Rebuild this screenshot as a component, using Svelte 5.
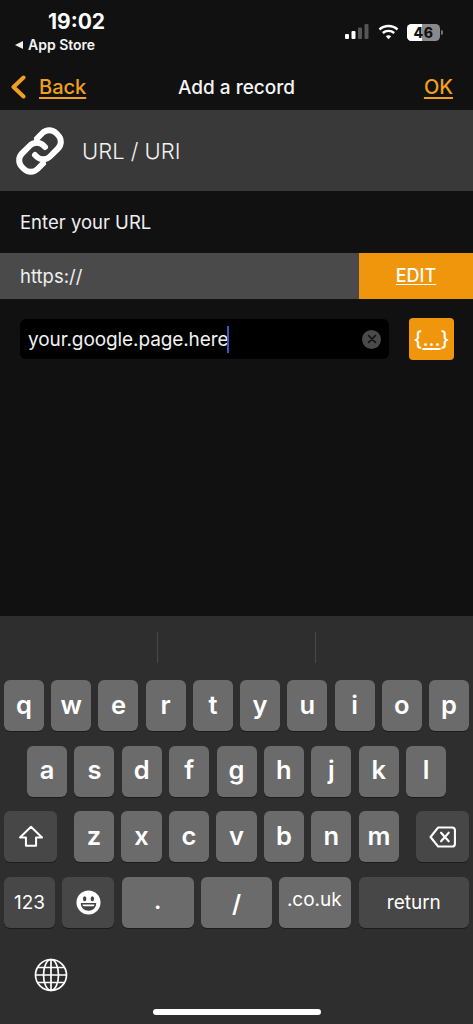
<script>
  const row1 = ['q','w','e','r','t','y','u','i','o','p'];
  const row2 = ['a','s','d','f','g','h','j','k','l'];
  const row3 = ['z','x','c','v','b','n','m'];
</script>

<div class="page">
  <div class="top">
    <div class="status">
      <div class="left">
        <div class="time">19:02</div>
        <div class="back-app"><span class="tri"></span>App Store</div>
      </div>
      <div class="right">
        <svg class="signal" width="24" height="16" viewBox="0 0 24 16">
          <rect x="0" y="10" width="4" height="5" rx="1" fill="#fff"/>
          <rect x="6.5" y="7" width="4" height="8" rx="1" fill="#fff"/>
          <rect x="13" y="3.5" width="4" height="11.500" rx="1" fill="#555"/>
          <rect x="19.500" y="0" width="4" height="15" rx="1" fill="#555"/>
        </svg>
        <svg class="wifi" width="21" height="16" viewBox="0 0 21 16" fill="none" stroke="#fff" stroke-width="2.400">
          <path d="M1.500 5.500C6.500 .9 14.500 .9 19.500 5.500"/>
          <path d="M4.800 9C7.900 6.200 13.100 6.200 16.200 9"/>
          <path d="M10.500 15.200L7.800 12.300C9.300 11 11.700 11 13.200 12.300Z" fill="#fff" stroke="none"/>
        </svg>
        <div class="battery"><span class="fill"></span><span class="num">46</span></div>
        <span class="nub"></span>
      </div>
    </div>
    <div class="nav">
      <div class="nav-left">
        <svg width="16" height="24" viewBox="0 0 16 24" fill="none" stroke="#f0a020" stroke-width="4" stroke-linecap="round" stroke-linejoin="round"><path d="M13.500 2.500L3.500 12l10 9.500"/></svg>
        <span class="link">Back</span>
      </div>
      <div class="title">Add a record</div>
      <span class="link ok">OK</span>
    </div>
  </div>

  <div class="section">
    <svg width="52" height="52" viewBox="0 0 52 52" fill="none" stroke="#fff" stroke-width="6" stroke-linecap="round">
      <path d="M23 13.500l5.500-5.500a9.500 9.500 0 0 1 13.500 0l2 2a9.500 9.500 0 0 1 0 13.500l-8 8a9.500 9.500 0 0 1-13.500 0l-1.500-1.500"/>
      <path d="M29 38.500l-5.500 5.500a9.500 9.500 0 0 1-13.500 0l-2-2a9.500 9.500 0 0 1 0-13.500l8-8a9.500 9.500 0 0 1 13.500 0l1.500 1.500"/>
    </svg>
    <span>URL / URI</span>
  </div>

  <div class="label">Enter your URL</div>

  <div class="scheme">
    <div class="scheme-text">https://</div>
    <div class="edit">EDIT</div>
  </div>

  <div class="input-row">
    <div class="input">
      <span class="value">your.google.page.here</span><span class="caret"></span>
      <span class="clear">
        <svg width="10" height="10" viewBox="0 0 10 10" stroke="#111" stroke-width="1.600" stroke-linecap="round"><path d="M1.500 1.500l7 7M8.500 1.500l-7 7"/></svg>
      </span>
    </div>
    <div class="braces">{'{'}<u>...</u>{'}'}</div>
  </div>

  <div class="spacer"></div>

  <div class="keyboard">
    <div class="suggest"><i></i><i></i></div>
    <div class="keys">
      <div class="row r1">{#each row1 as k}<div class="key">{k}</div>{/each}</div>
      <div class="row r2">{#each row2 as k}<div class="key">{k}</div>{/each}</div>
      <div class="row r3">
        <div class="key dark wide">
          <svg width="26" height="23" viewBox="0 0 28 25" fill="none" stroke="#fff" stroke-width="2.200" stroke-linejoin="round"><path d="M14 2L2 13.500h6.500v9h11v-9H26Z"/></svg>
        </div>
        <div class="letters">{#each row3 as k}<div class="key">{k}</div>{/each}</div>
        <div class="key dark wide">
          <svg width="27" height="22" viewBox="0 0 28 23" fill="none" stroke="#fff" stroke-width="2.200" stroke-linejoin="round" stroke-linecap="round"><path d="M9.500 1.500H24a3 3 0 0 1 3 3v14a3 3 0 0 1-3 3H9.500L1.500 11.500Z"/><path d="M12.500 7l8 9M20.500 7l-8 9"/></svg>
        </div>
      </div>
      <div class="row r4">
        <div class="key dark small">123</div>
        <div class="key dark">
          <svg width="25" height="25" viewBox="0 0 26 26"><circle cx="13" cy="13" r="12.500" fill="#fff"/><ellipse cx="9" cy="9" rx="1.800" ry="2.600" fill="#444"/><ellipse cx="17" cy="9" rx="1.800" ry="2.600" fill="#444"/><path d="M5 13.500h16c0 5-3.500 8-8 8s-8-3-8-8Z" fill="#444"/><path d="M6.800 15h12.400c-.2 1-.5 1.500-1 2H7.800c-.5-.5-.8-1-1-2Z" fill="#fff"/></svg>
        </div>
        <div class="key punct">.</div>
        <div class="key punct slash">/</div>
        <div class="key small couk">.co.uk</div>
        <div class="key dark small">return</div>
      </div>
    </div>
    <div class="bottom">
      <svg class="globe" width="34" height="34" viewBox="0 0 34 34" fill="none" stroke="#fff" stroke-width="1.700">
        <circle cx="17" cy="17" r="15.500"/>
        <ellipse cx="17" cy="17" rx="7.500" ry="15.500"/>
        <path d="M17 1.500v31M1.500 17h31M3.800 9.500h26.400M3.800 24.500h26.400"/>
      </svg>
      <div class="home"></div>
    </div>
  </div>
</div>

<style>
  :global(body) { margin: 0; background: #111; }
  .page {
    width: 473px; height: 1024px; display: flex; flex-direction: column;
    background: #111112; color: #f2f2f2; font-family: Inter, "Liberation Sans", sans-serif; overflow: hidden;
  }
  .top { height: 110px; display: flex; flex-direction: column; }
  .status { height: 66px; display: flex; justify-content: space-between; }
  .left { padding: 10px 0 0 15px; }
  .time { font-size: 21px; font-weight: 700; line-height: 24px; color: #fff; margin-left: 33px; }
  .back-app { font-size: 14px; font-weight: 600; line-height: 20px; color: #f4f4f4; display: flex; align-items: center; gap: 5px; margin-top: 1px; }
  .tri { border: 4.500px solid transparent; border-right: 8px solid #eee; border-left: 0; }
  .right { display: flex; align-items: center; padding: 0 30px 0 0; height: 64px; position: relative; }
  .signal { margin-right: 9px; }
  .wifi { margin-right: 8px; }
  .battery {
    width: 33px; height: 17px; border-radius: 4.500px; background: #8a8a8a; position: relative; overflow: hidden;
    display: flex; align-items: center; justify-content: center;
  }
  .fill { position: absolute; left: 0; top: 0; bottom: 0; width: 46%; background: #fff; }
  .num { position: relative; font-size: 14px; font-weight: 800; color: #111; letter-spacing: .5px; }
  .nub { width: 2px; height: 5px; background: #777; margin-left: 1px; border-radius: 0 2px 2px 0; }
  .nav { flex: 1; display: flex; align-items: center; justify-content: space-between; padding: 0 11px 0 10px; position: relative; margin-top: -2px; }
  .nav-left { display: flex; align-items: center; gap: 13px; }
  .link { color: #f0a020; font-size: 20px; font-weight: 500; text-decoration: underline; text-underline-offset: 3px; text-decoration-thickness: 1.500px; }
  .ok { margin-right: 9px; }
  .title { position: absolute; left: 0; right: 0; text-align: center; font-size: 19px; font-weight: 500; color: #f5f5f5; }
  .section { height: 81px; background: #393939; display: flex; align-items: center; padding-left: 14px; gap: 16px; font-size: 22px; font-weight: 300; color: #f2f2f2; }
  .label { height: 62px; display: flex; align-items: center; padding-left: 20px; font-size: 18.500px; font-weight: 400; color: #efefef; }
  .scheme { height: 46px; display: flex; background: #4a4a4a; }
  .scheme-text { flex: 1; padding-left: 20px; font-size: 18.500px; line-height: 46px; color: #efefef; }
  .edit { width: 114px; background: #f0960c; color: #fff; text-align: center; font-size: 18px; font-weight: 500; line-height: 46px; text-decoration: underline; text-underline-offset: 2px; }
  .input-row { display: flex; align-items: center; padding: 19px 19px 0 20px; gap: 20px; }
  .input { flex: 1; height: 40px; background: #000; border-radius: 6px; display: flex; align-items: center; padding: 0 8px; font-size: 19px; color: #f2f2f2; }
  .value { letter-spacing: -.1px; }
  .caret { width: 2px; height: 27px; background: #3a57c8; margin-left: -1px; }
  .clear { margin-left: auto; width: 19px; height: 19px; border-radius: 50%; background: #4a4a4a; display: flex; align-items: center; justify-content: center; }
  .braces { width: 45px; height: 42px; border-radius: 4px; background: #f0960c; color: #fff; display: flex; align-items: center; justify-content: center; font-size: 20px; font-weight: 500; }
  .braces u { text-underline-offset: 2px; }
  .spacer { flex: 1; }
  .keyboard { height: 408px; background: #2e2e2e; display: flex; flex-direction: column; }
  .suggest { height: 64px; position: relative; display: flex; justify-content: center; gap: 157px; padding-top: 16px; box-sizing: border-box; }
  .suggest i { display: block; width: 1px; height: 31px; background: #484848; }
  .keys { display: flex; flex-direction: column; gap: 14.500px; padding: 0 4px; }
  .row { display: flex; gap: 7.330px; height: 51px; }
  .key {
    flex: 1 1 0; min-width: 0; background: #6b6b6b; border-radius: 6px; display: flex; align-items: center; justify-content: center;
    color: #fff; font-size: 25.500px; font-weight: 600; padding-bottom: 3px; box-sizing: border-box; box-shadow: 0 1px 0 #1c1c1c;
  }
  .key.dark { background: #474747; }
  .r2 { padding: 0 23px; }
  .r3 { gap: 17px; }
  .wide { flex: 0 0 53px; padding-bottom: 0; }
  .letters { flex: 1; display: flex; gap: 7.330px; }
  .r4 { gap: 7.330px; }
  .r4 .key { font-weight: 400; font-size: 19px; padding-bottom: 0; }
  .r4 .key:nth-child(1) { flex: 0 0 51px; }
  .r4 .key:nth-child(2) { flex: 0 0 52px; }
  .r4 .key:nth-child(3) { flex: 0 0 72px; }
  .r4 .key:nth-child(4) { flex: 0 0 71px; }
  .r4 .key:nth-child(5) { flex: 0 0 72px; }
  .r4 .key:nth-child(6) { flex: 1 1 0; }
  .r4 .punct { font-size: 23px; font-weight: 600; padding-bottom: 2px; }
  .r4 .slash { font-size: 24px; padding: 2px 0 0; }
  .r4 .couk { padding-bottom: 5px; padding-right: 2px; }
  .bottom { flex: 1; position: relative; }
  .globe { position: absolute; left: 34px; top: 30px; }
  .home { position: absolute; left: 153px; bottom: 9px; width: 168px; height: 6px; background: #fff; border-radius: 3px; }
</style>
